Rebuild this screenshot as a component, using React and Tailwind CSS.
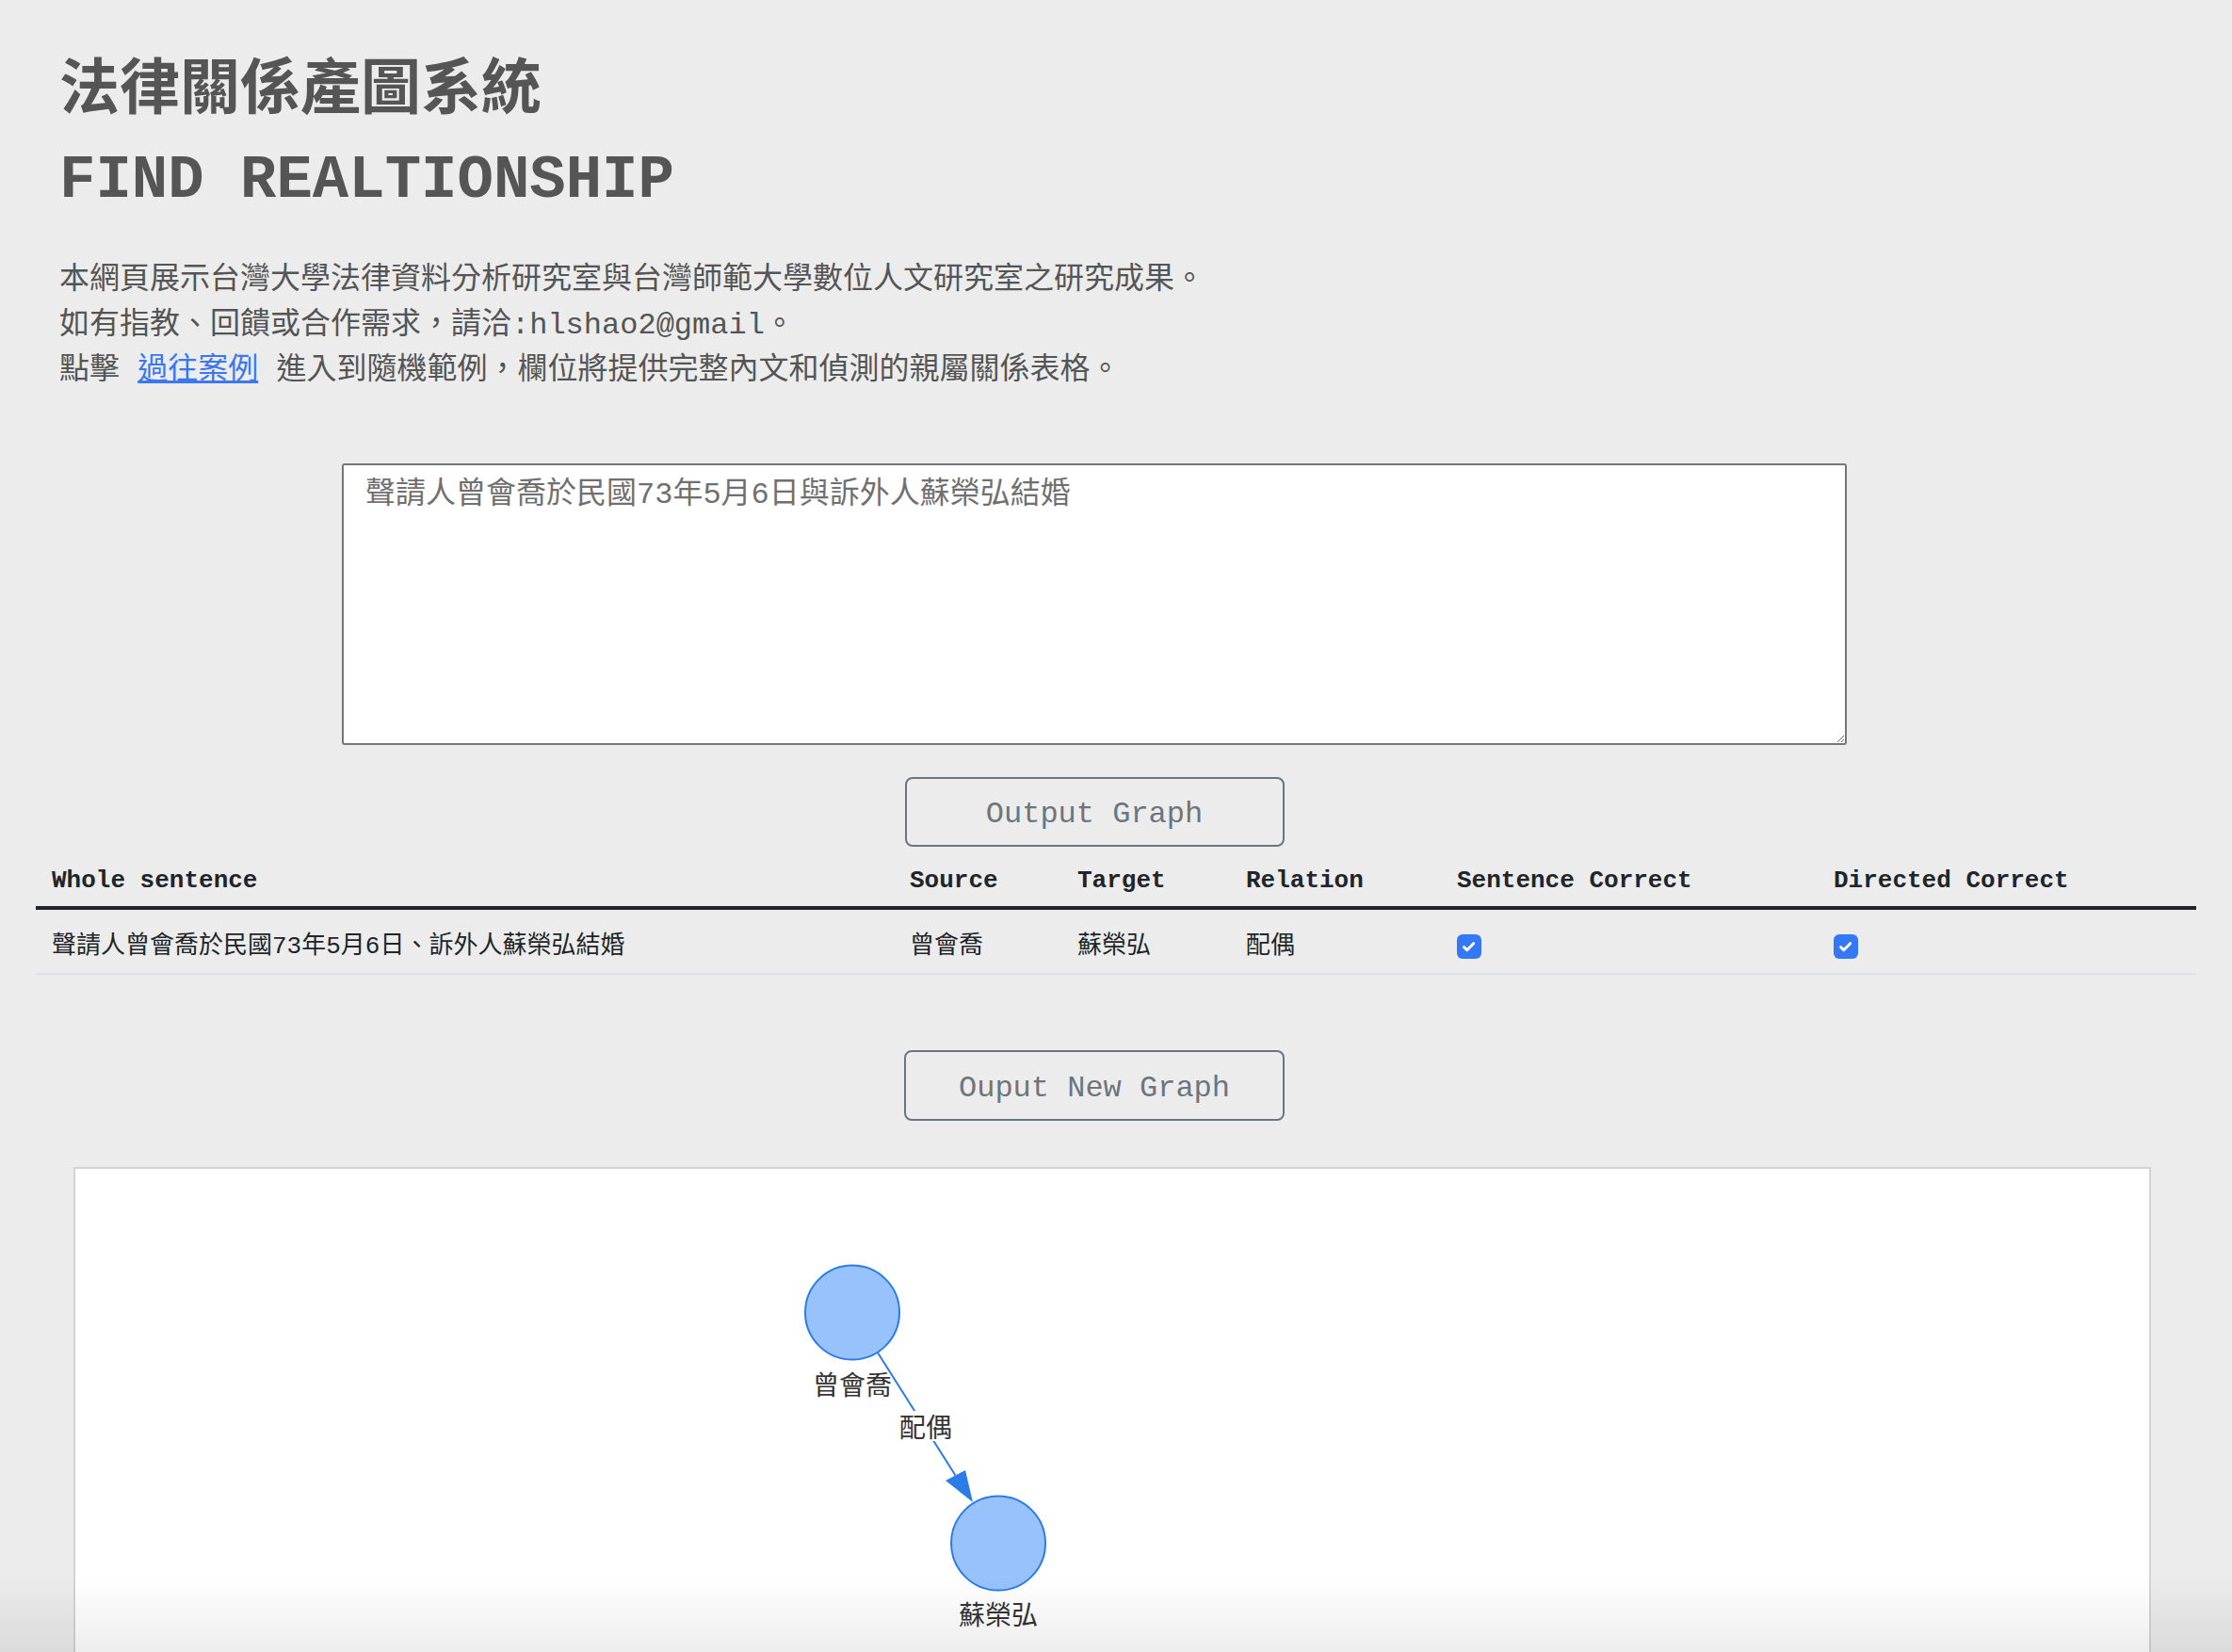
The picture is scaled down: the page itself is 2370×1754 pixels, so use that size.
import React from 'react';

const rows = [
  {
    sentence: '聲請人曾會喬於民國73年5月6日、訴外人蘇榮弘結婚',
    source: '曾會喬',
    target: '蘇榮弘',
    relation: '配偶',
    sentenceOk: true,
    directedOk: true,
  },
];

const CheckBox = () => (
  <span className="inline-flex h-[26px] w-[26px] items-center justify-center rounded-[6px] bg-[#3478f6] align-middle">
    <svg width="26" height="26" viewBox="0 0 26 26">
      <path d="M7.5 13.5l3.2 3.2 7-7" fill="none" stroke="#fff" strokeWidth="3" strokeLinecap="round" strokeLinejoin="round" />
    </svg>
  </span>
);

const Graph = () => (
  <svg width="2202" height="620" className="block">
    <line x1="851.7" y1="194.8" x2="934.5" y2="325.5" stroke="#2B7CE9" strokeWidth="2" />
    <polygon points="953,354 924,331 945,320" fill="#2B7CE9" />
    <circle cx="825" cy="152.5" r="50" fill="#97C2FC" stroke="#2B7CE9" strokeWidth="2" />
    <circle cx="980" cy="397.5" r="50" fill="#97C2FC" stroke="#2B7CE9" strokeWidth="2" />
    <text x="825" y="228" textAnchor="middle" dominantBaseline="central" fontSize="28" fill="#343434" fontFamily="'Noto Sans CJK TC', sans-serif">曾會喬</text>
    <text x="980" y="472" textAnchor="middle" dominantBaseline="central" fontSize="28" fill="#343434" fontFamily="'Noto Sans CJK TC', sans-serif">蘇榮弘</text>
    <rect x="873" y="257" width="60" height="32" fill="#fff" />
    <text x="903" y="273" textAnchor="middle" dominantBaseline="central" fontSize="28" fill="#343434" fontFamily="'Noto Sans CJK TC', sans-serif">配偶</text>
  </svg>
);

export default function App() {
  return (
    <div className="min-h-screen w-full overflow-hidden bg-[#ececec] pt-[60px] text-[#555] [font-family:'Liberation_Mono','Noto_Sans_CJK_TC',monospace]">
      {/* Heading */}
      <div className="pl-[63px]">
        <h1 className="text-[64px] font-bold leading-[76px] text-[#555]">法律關係產圖系統</h1>
        <h2 className="mt-[18px] text-[64px] font-bold leading-[76px] text-[#555]">FIND REALTIONSHIP</h2>
        <div className="mt-[44px] text-[32px] leading-[48px] text-[#555]">
          <p>本網頁展示台灣大學法律資料分析研究室與台灣師範大學數位人文研究室之研究成果。</p>
          <p>如有指教、回饋或合作需求，請洽:hlshao2@gmail。</p>
          <p>
            點擊 <a href="#" className="text-[#3b78f0] underline">過往案例</a> 進入到隨機範例，欄位將提供完整內文和偵測的親屬關係表格。
          </p>
        </div>
      </div>

      {/* Input */}
      <div className="flex w-[2324px] flex-col items-center">
        <textarea
          className="mt-[74px] h-[299px] w-[1598px] rounded-[3px] border-2 border-[#767676] bg-white px-[23px] pt-[8px] text-[32px] leading-[48px] text-[#333] placeholder:text-[#707070] focus:outline-none"
          placeholder="聲請人曾會喬於民國73年5月6日與訴外人蘇榮弘結婚"
        />
        <button className="mt-[34px] flex h-[74px] w-[403px] items-center justify-center rounded-[8px] border-2 border-[#6c757d] pt-[6px] text-[32px] text-[#6c757d]">
          Output Graph
        </button>
      </div>

      {/* Result table */}
      <table className="mx-[38px] mt-[10px] w-[2294px] table-fixed border-collapse text-left text-[26px] leading-[39px] text-[#212529]">
        <thead>
          <tr className="border-b-4 border-[#212529]">
            <th className="w-[911px] pb-[7px] pl-[17px] pt-[7px] font-bold">Whole sentence</th>
            <th className="w-[178px] pb-[7px] pl-[17px] pt-[7px] font-bold">Source</th>
            <th className="w-[179px] pb-[7px] pl-[17px] pt-[7px] font-bold">Target</th>
            <th className="w-[224px] pb-[7px] pl-[17px] pt-[7px] font-bold">Relation</th>
            <th className="w-[400px] pb-[7px] pl-[17px] pt-[7px] font-bold">Sentence Correct</th>
            <th className="w-[402px] pb-[7px] pl-[17px] pt-[7px] font-bold">Directed Correct</th>
          </tr>
        </thead>
        <tbody>
          {rows.map((r, i) => (
            <tr key={i} className="border-b-2 border-[#dee2e6]">
              <td className="pb-[8px] pl-[17px] pt-[20px]">{r.sentence}</td>
              <td className="pb-[8px] pl-[17px] pt-[20px]">{r.source}</td>
              <td className="pb-[8px] pl-[17px] pt-[20px]">{r.target}</td>
              <td className="pb-[8px] pl-[17px] pt-[20px]">{r.relation}</td>
              <td className="pb-[8px] pl-[17px] pt-[20px]">{r.sentenceOk && <CheckBox />}</td>
              <td className="pb-[8px] pl-[17px] pt-[20px]">{r.directedOk && <CheckBox />}</td>
            </tr>
          ))}
        </tbody>
      </table>

      <div className="flex w-[2324px] flex-col items-center">
        <button className="mt-[80px] flex h-[75px] w-[404px] items-center justify-center rounded-[8px] border-2 border-[#6c757d] pt-[6px] text-[32px] text-[#6c757d]">
          Ouput New Graph
        </button>
      </div>

      {/* Graph canvas */}
      <div className="ml-[78px] mt-[49px] h-[640px] w-[2206px] border-2 border-[#d3d3d3] bg-white">
        <Graph />
      </div>

      {/* bottom shade */}
      <div className="pointer-events-none fixed bottom-0 left-0 h-[80px] w-full bg-linear-to-b from-transparent to-black/[0.07]" />
    </div>
  );
}
